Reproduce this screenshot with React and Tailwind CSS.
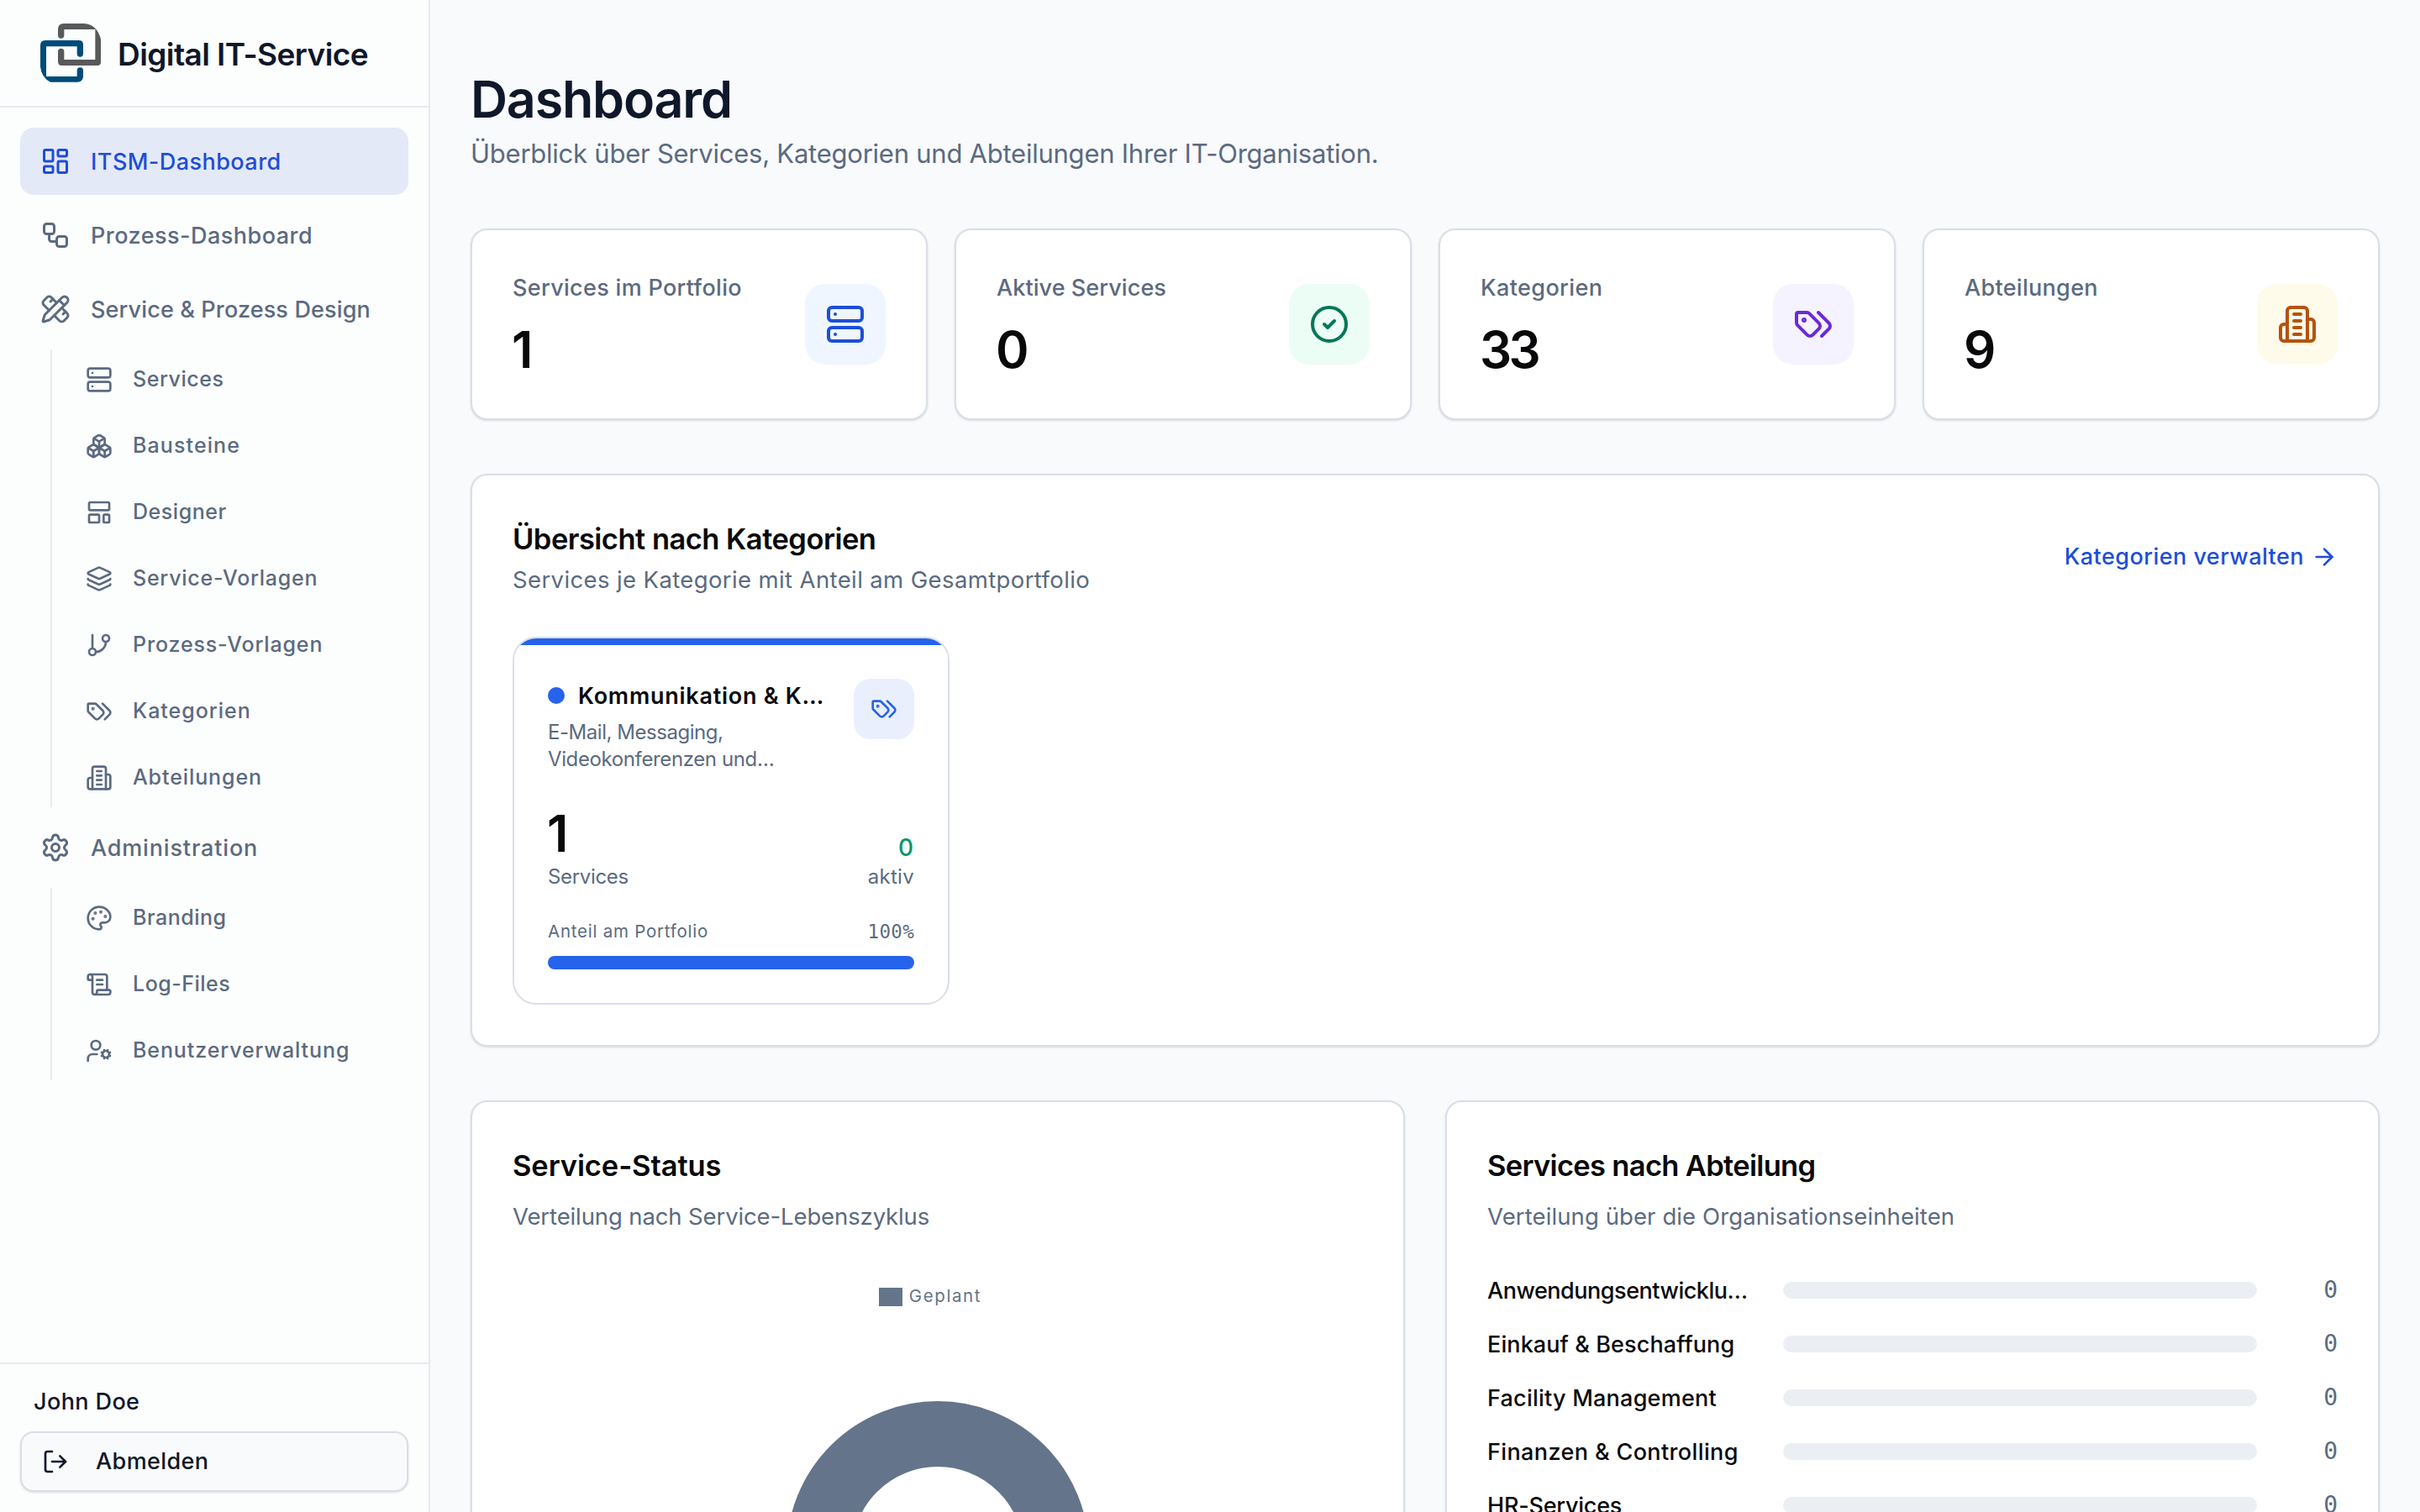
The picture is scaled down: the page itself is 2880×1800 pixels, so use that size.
import React from 'react';
import {
    ArrowRight,
    Boxes,
    CircleCheck,
    GitBranch,
    Layers,
    LayoutDashboard,
    LayoutTemplate,
    LogOut,
    Palette,
    PencilRuler,
    ScrollText,
    Server,
    Settings,
    UserCog,
    Workflow,
} from 'lucide-react';

const Tags = ({ className }) => (
    <svg viewBox="0 0 24 24" fill="none" stroke="currentColor" strokeWidth="2" strokeLinecap="round" strokeLinejoin="round" className={className}>
        <path d="m15 5 6.3 6.3a2.4 2.4 0 0 1 0 3.4L17 19" />
        <path d="M9.586 5.586A2 2 0 0 0 8.172 5H3a1 1 0 0 0-1 1v5.172a2 2 0 0 0 .586 1.414L8.29 18.29a2.426 2.426 0 0 0 3.42 0l3.58-3.58a2.426 2.426 0 0 0 0-3.42z" />
        <circle cx="6.5" cy="9.5" r=".5" fill="currentColor" />
    </svg>
);

const Building = ({ className }) => (
    <svg viewBox="0 0 24 24" fill="none" stroke="currentColor" strokeWidth="2" strokeLinecap="round" strokeLinejoin="round" className={className}>
        <path d="M6 22V4a2 2 0 0 1 2-2h8a2 2 0 0 1 2 2v18Z" />
        <path d="M6 12H4a2 2 0 0 0-2 2v6a2 2 0 0 0 2 2h2" />
        <path d="M18 9h2a2 2 0 0 1 2 2v9a2 2 0 0 1-2 2h-2" />
        <path d="M10 6h4" />
        <path d="M10 10h4" />
        <path d="M10 14h4" />
        <path d="M10 18h4" />
    </svg>
);

const Logo = () => (
    <svg viewBox="144 84 216 210" className="w-[72px] h-[70px] shrink-0">
        <path
            fill="#58595b"
            d="M228 84H300Q346 87 360 140V222Q360 234 348 234H220Q207 234 207 220V184a11 11 0 0 1 22 0V213H340V105H229V126a11 11 0 0 1-22 0V105Q207 84 228 84Z"
        />
        <path
            fill="#004b78"
            d="M162 144H281Q297 144 297 160V192a11 11 0 0 1-22 0V166H165V273H275V252a11 11 0 0 1 22 0V274Q295 293 277 293H180Q148 278 144 238V162Q144 144 162 144Z"
        />
    </svg>
);

const designItems = [
    { label: 'Services', icon: Server, tracking: 'tracking-[0.55px]' },
    { label: 'Bausteine', icon: Boxes, tracking: 'tracking-[1.1px]' },
    { label: 'Designer', icon: LayoutTemplate, tracking: 'tracking-[0.55px]' },
    { label: 'Service-Vorlagen', icon: Layers, tracking: 'tracking-[0.75px]' },
    { label: 'Prozess-Vorlagen', icon: GitBranch, tracking: 'tracking-[0.85px]' },
    { label: 'Kategorien', icon: Tags, tracking: 'tracking-[0.98px]' },
    { label: 'Abteilungen', icon: Building, tracking: 'tracking-[0.9px]' },
];

const adminItems = [
    { label: 'Branding', icon: Palette, tracking: 'tracking-[0.5px]' },
    { label: 'Log-Files', icon: ScrollText, tracking: 'tracking-[0.5px]' },
    { label: 'Benutzerverwaltung', icon: UserCog, tracking: 'tracking-[0.9px]' },
];

const stats = [
    { label: 'Services im Portfolio', value: 1, icon: Server, tile: 'bg-[#eff6ff] text-[#1d4ed8]', tracking: 'tracking-[0.32px]' },
    { label: 'Aktive Services', value: 0, icon: CircleCheck, tile: 'bg-[#ecfdf5] text-[#047857]', tracking: 'tracking-[0.08px]' },
    { label: 'Kategorien', value: 33, icon: Tags, tile: 'bg-[#f5f3ff] text-[#6d28d9]', tracking: 'tracking-[0.4px]' },
    { label: 'Abteilungen', value: 9, icon: Building, tile: 'bg-[#fffbeb] text-[#b45309]', tracking: 'tracking-[0.3px]' },
];

const departments = [
    { name: 'Anwendungsentwicklu…', count: 0, tracking: 'tracking-[-0.47px]' },
    { name: 'Einkauf & Beschaffung', count: 0, tracking: 'tracking-[0.1px]' },
    { name: 'Facility Management', count: 0, tracking: 'tracking-[0.23px]' },
    { name: 'Finanzen & Controlling', count: 0, tracking: 'tracking-[0.38px]' },
    { name: 'HR-Services', count: 0, tracking: 'tracking-[-0.22px]' },
];

const NavItem = ({ icon: Icon, label, tracking, active }) => (
    <a className={`flex items-center gap-6 h-20 px-6 rounded-2xl text-[27px] font-medium whitespace-nowrap ${tracking} ${active ? 'bg-[#e4e9f8] text-[#1d4ed8]' : 'text-[#5b6a80]'}`}>
        <Icon className="w-9 h-9 shrink-0" />
        <span className="pt-0.5">{label}</span>
    </a>
);

const SubNav = ({ items }) => (
    <div className="ml-9 pl-4 border-l-2 border-[#e8eaf0] flex flex-col gap-2">
        {items.map(({ icon: Icon, label, tracking }) => (
            <a key={label} className={`flex items-center gap-6 h-[71px] px-6 text-[25px] font-medium text-[#5b6a80] whitespace-nowrap ${tracking}`}>
                <Icon className="w-8 h-8 shrink-0" />
                <span className="pt-px">{label}</span>
            </a>
        ))}
    </div>
);

const Sidebar = () => (
    <aside className="w-[512px] shrink-0 h-full flex flex-col bg-[#fcfdfd] border-r-2 border-[#e8eaf0]">
        <div className="h-32 shrink-0 flex items-center gap-5 px-12 border-b-2 border-[#e8eaf0]">
            <Logo />
            <span className="pt-[3px] text-[37px] font-semibold tracking-[-0.58px] text-[#0f172a] whitespace-nowrap">Digital IT-Service</span>
        </div>
        <nav className="flex-1 p-6 flex flex-col gap-2">
            <NavItem icon={LayoutDashboard} label="ITSM-Dashboard" tracking="tracking-[0.45px]" active />
            <NavItem icon={Workflow} label="Prozess-Dashboard" tracking="tracking-[0.48px]" />
            <NavItem icon={PencilRuler} label="Service & Prozess Design" tracking="tracking-[0.14px]" />
            <SubNav items={designItems} />
            <NavItem icon={Settings} label="Administration" tracking="tracking-[0.84px]" />
            <SubNav items={adminItems} />
        </nav>
        <div className="border-t-2 border-[#e8eaf0] px-6 pt-[25px] pb-6 text-[27px] font-medium text-[#0f172a]">
            <div className="px-4 mb-[15px] leading-10 tracking-[0.4px]">John Doe</div>
            <button className="w-full h-[72px] flex items-center gap-8 px-6 rounded-2xl border-2 border-[#d9dee8] bg-[#f9fafc] shadow-sm tracking-[0.4px]">
                <LogOut className="w-8 h-8" />
                <span className="pt-px">Abmelden</span>
            </button>
        </div>
    </aside>
);

const StatCard = ({ label, value, icon: Icon, tile, tracking }) => (
    <div className="h-[228px] flex items-center justify-between px-12 bg-white rounded-[20px] border-2 border-[#d9dee8] shadow-sm">
        <div className="pt-0.5">
            <p className={`pt-px text-[27px] leading-10 font-medium text-[#5b6a80] ${tracking}`}>{label}</p>
            <p className="-ml-px mt-[17px] text-[60px] leading-[72px] font-semibold tracking-[-3.6px] text-[#09090b]">{value}</p>
        </div>
        <div className={`w-24 h-24 flex items-center justify-center rounded-3xl ${tile}`}>
            <Icon className="w-12 h-12" />
        </div>
    </div>
);

const CategoryCard = () => (
    <div className="w-[520px] bg-white rounded-[28px] border-2 border-[#d9dee8] overflow-hidden">
        <div className="h-2 bg-[#2563eb]" />
        <div className="p-10">
            <div className="flex justify-between h-[111px]">
                <div>
                    <div className="flex items-center gap-4 h-10">
                        <span className="w-5 h-5 rounded-full bg-[#2563eb]" />
                        <h3 className="pt-0.5 text-[27px] font-semibold tracking-[0.74px] text-[#09090b] whitespace-nowrap">Kommunikation & K…</h3>
                    </div>
                    <p className="mt-2 text-[24px] leading-8 text-[#5b6a80]">
                        <span className="block tracking-[-0.46px]">E-Mail, Messaging,</span>
                        <span className="block tracking-[-0.38px]">Videokonferenzen und…</span>
                    </p>
                </div>
                <div className="w-[72px] h-[72px] shrink-0 flex items-center justify-center rounded-[20px] bg-[#e9effd] text-[#2563eb]">
                    <Tags className="w-8 h-8" />
                </div>
            </div>
            <div className="mt-[41px] flex items-end justify-between text-[24px] leading-8 text-[#5b6a80]">
                <div>
                    <p className="-ml-px mb-1 text-[60px] leading-[64px] font-semibold text-[#09090b]">1</p>
                    <p className="tracking-[-0.33px]">Services</p>
                </div>
                <div className="text-right">
                    <p className="pt-px pr-px -mb-px text-[28px] leading-10 font-medium text-[#059669]">0</p>
                    <p className="tracking-[0.3px]">aktiv</p>
                </div>
            </div>
            <div className="mt-[33px] flex items-center justify-between leading-8 text-[#5b6a80]">
                <span className="text-[20.5px] tracking-[0.76px]">Anteil am Portfolio</span>
                <span className="font-['DejaVu_Sans_Mono',monospace] text-[22.5px] tracking-[0.3px]">100%</span>
            </div>
            <div className="mt-[13px] h-4 rounded-full bg-[#2563eb]" />
        </div>
    </div>
);

const PanelTitle = ({ title, subtitle, titleTracking, subtitleTracking }) => (
    <>
        <h2 className={`pt-px text-[34.5px] leading-[54px] font-semibold text-[#09090b] ${titleTracking}`}>{title}</h2>
        <p className={`mt-[11px] text-[27.5px] leading-[44px] text-[#5b6a80] ${subtitleTracking}`}>{subtitle}</p>
    </>
);

export default function App() {
    return (
        <div className="w-[2880px] h-[1800px] overflow-hidden flex bg-[#f8fafc] font-['Inter',sans-serif]">
            <Sidebar />
            <main className="flex-1 h-full overflow-hidden px-12 pt-[78px]">
                <h1 className="text-[61px] leading-[80px] font-semibold tracking-[-1.22px] text-[#0f172a]">Dashboard</h1>
                <p className="pt-px text-[31px] leading-[48px] tracking-[-0.24px] text-[#5b6a80]">Überblick über Services, Kategorien und Abteilungen Ihrer IT-Organisation.</p>

                <div className="mt-[65px] grid grid-cols-4 gap-8">
                    {stats.map((s) => <StatCard key={s.label} {...s} />)}
                </div>

                <section className="mt-16 h-[682px] p-12 bg-white rounded-[20px] border-2 border-[#d9dee8] shadow-sm">
                    <div className="flex items-center justify-between">
                        <div>
                            <h2 className="pt-px -mb-px text-[34.5px] leading-[54px] font-semibold tracking-[-0.52px] text-[#09090b]">Übersicht nach Kategorien</h2>
                            <p className="text-[27.5px] leading-[44px] tracking-[0.38px] text-[#5b6a80]">Services je Kategorie mit Anteil am Gesamtportfolio</p>
                        </div>
                        <a className="flex items-center gap-2 text-[27px] font-medium tracking-[0.46px] text-[#1d4ed8]">
                            Kategorien verwalten
                            <ArrowRight className="w-8 h-8" />
                        </a>
                    </div>
                    <div className="mt-[46px] grid grid-cols-4 gap-8">
                        <CategoryCard />
                    </div>
                </section>

                <div className="mt-16 grid grid-cols-2 gap-12">
                    <section className="h-[760px] p-12 bg-white rounded-[20px] border-2 border-[#d9dee8] shadow-sm">
                        <PanelTitle title="Service-Status" subtitle="Verteilung nach Service-Lebenszyklus" titleTracking="tracking-[-0.1px]" subtitleTracking="tracking-[-0.12px]" />
                        <div className="mt-[60px] h-7 flex items-center justify-center gap-2 pr-[18px]">
                            <span className="w-7 h-[22px] bg-[#64748b]" />
                            <span className="pb-0.5 text-[20.5px] leading-[26px] tracking-[1.6px] text-[#64748b]">Geplant</span>
                        </div>
                        <svg viewBox="0 0 360 360" className="mt-[110px] mx-auto w-[360px] h-[360px]">
                            <circle cx="180" cy="180" r="141" fill="none" stroke="#64748b" strokeWidth="78" />
                        </svg>
                    </section>

                    <section className="h-[760px] p-12 bg-white rounded-[20px] border-2 border-[#d9dee8] shadow-sm">
                        <PanelTitle title="Services nach Abteilung" subtitle="Verteilung über die Organisationseinheiten" titleTracking="tracking-[-0.68px]" subtitleTracking="tracking-[0.1px]" />
                        <div className="mt-[46px] flex flex-col gap-6">
                            {departments.map((d) => (
                                <div key={d.name} className="flex items-center gap-8 h-10">
                                    <span className={`pt-0.5 w-[320px] shrink-0 text-[27px] font-medium text-[#09090b] whitespace-nowrap ${d.tracking}`}>{d.name}</span>
                                    <div className="flex-1 h-5 rounded-full bg-[#ebeef3]" />
                                    <span className="w-16 text-right font-['DejaVu_Sans_Mono',monospace] text-[28px] text-[#5b6a80]">{d.count}</span>
                                </div>
                            ))}
                        </div>
                    </section>
                </div>
            </main>
        </div>
    );
}
